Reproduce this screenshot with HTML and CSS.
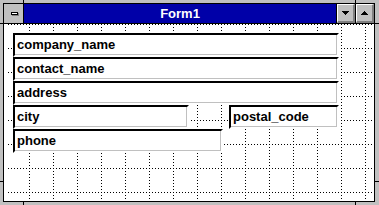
FILE: index.html
```html
<!DOCTYPE html>
<html lang="en">
<head>
<meta charset="UTF-8" />
<title>Form1</title>
<link rel="stylesheet" href="styles.css">
</head>
<body>
<div class="window">
  <div class="frame">
    <div class="titlebar">
      <div class="sysmenu"><span class="sysbar"></span></div>
      <div class="caption">Form1</div>
      <div class="tbtn">
        <svg width="7" height="4" viewBox="0 0 7 4"><path d="M0 0h7v1h-1v1h-1v1h-1v1h-1v-1h-1v-1h-1v-1h-1z" fill="#000"/></svg>
      </div>
      <div class="tbtn">
        <svg width="7" height="4" viewBox="0 0 7 4"><path d="M3 0h1v1h1v1h1v1h1v1h-7v-1h1v-1h1v-1h1z" fill="#000"/></svg>
      </div>
    </div>
    <div class="client">
      <svg class="grid" width="366" height="177">
        <defs>
          <pattern id="dots" width="24" height="24" x="21" y="0" patternUnits="userSpaceOnUse">
            <line x1="0.5" y1="0" x2="0.5" y2="24" stroke="#000" stroke-dasharray="1 2"/>
            <line x1="0" y1="0.5" x2="24" y2="0.5" stroke="#000" stroke-dasharray="1 2"/>
          </pattern>
        </defs>
        <rect width="366" height="177" fill="url(#dots)"/>
      </svg>
      <div class="controls">
        <div class="textbox wide">company_name</div>
        <div class="textbox wide">contact_name</div>
        <div class="textbox wide">address</div>
        <div class="row">
          <div class="textbox city">city</div>
          <div class="textbox postal">postal_code</div>
        </div>
        <div class="textbox phone">phone</div>
      </div>
    </div>
  </div>
</div>
</body>
</html>
```

FILE: styles.css
```css
body {
  margin: 0;
  font-family: "Liberation Sans", Arial, sans-serif;
}
.window {
  position: relative;
  width: 379px;
  height: 205px;
  box-sizing: border-box;
  background: #c0c0c0;
  padding: 3px 4px 3px 3px;
}
/* corner marks of the sizing frame */
.window::before,
.window::after {
  content: "";
  position: absolute;
  background: #000;
}
.window::before {
  left: 23px;
  top: 0;
  width: 1px;
  height: 3px;
  box-shadow: 332px 0 #000, 0 202px #000, 332px 202px #000;
}
.window::after {
  left: 0;
  top: 23px;
  width: 4px;
  height: 1px;
  box-shadow: 0 158px #000, 375px 0 #000, 375px 158px #000;
}
.frame {
  height: 100%;
  box-sizing: border-box;
  border: 1px solid #000;
  display: flex;
  flex-direction: column;
}
.titlebar {
  display: flex;
  height: 19px;
  border-bottom: 1px solid #000;
}
.sysmenu {
  width: 19px;
  background: #c0c0c0;
  border-right: 1px solid #000;
  display: flex;
  align-items: center;
  justify-content: center;
}
.sysbar {
  width: 5px;
  height: 1px;
  margin-left: 1px;
  background: #fff;
  border: 1px solid #000;
  box-shadow: 1px 1px 0 #808080;
}
.caption {
  flex: 1;
  background: #0000a8;
  color: #fff;
  font-weight: bold;
  font-size: 13px;
  line-height: 19px;
  text-align: center;
  border-right: 1px solid #000;
}
.tbtn {
  width: 18px;
  box-sizing: border-box;
  background: #c0c0c0;
  border-top: 1px solid #fff;
  border-left: 1px solid #fff;
  border-right: 2px solid #808080;
  border-bottom: 2px solid #808080;
  display: flex;
  align-items: center;
  justify-content: center;
}
.tbtn + .tbtn {
  box-shadow: -1px 0 0 #000;
  margin-left: 1px;
}
.client {
  flex: 1;
  background: #fff;
  display: grid;
  overflow: hidden;
}
.grid {
  grid-area: 1 / 1;
  display: block;
  margin-left: 4px;
  shape-rendering: crispEdges;
}
.controls {
  grid-area: 1 / 1;
  padding: 9px 0 0 9px;
  width: 326px;
  display: flex;
  flex-direction: column;
}
.textbox {
  height: 24px;
  box-sizing: border-box;
  background: #fff;
  border-style: solid;
  border-width: 2px;
  border-color: #000 #fff #fff #000;
  box-shadow: inset -1px -1px 0 #c0c0c0;
  padding-left: 2px;
  font-size: 13px;
  font-weight: bold;
  line-height: 20px;
  color: #000;
}
.wide {
  width: 326px;
}
.row {
  display: flex;
  justify-content: space-between;
}
.city {
  width: 176px;
}
.postal {
  width: 110px;
}
.phone {
  width: 210px;
}
```
